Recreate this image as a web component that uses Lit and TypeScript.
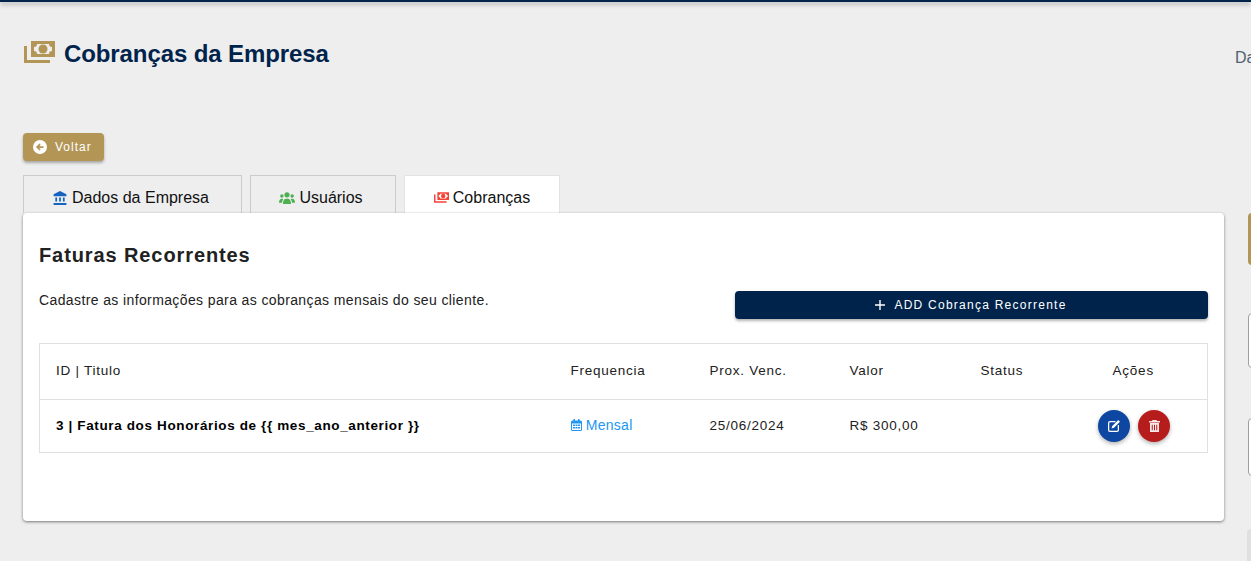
import { LitElement, html, css, svg } from "lit";
import { customElement } from "lit/decorators.js";

const bills = (fg: string) => svg`
  <path fill=${fg} fill-rule="evenodd" d="M7 0h24v16H7zM13 3a3 3 0 0 1-3 3v4a3 3 0 0 1 3 3h12a3 3 0 0 1 3-3V6a3 3 0 0 1-3-3z"/>
  <circle fill=${fg} cx="19" cy="8" r="4.500"/>
  <path fill=${fg} d="M0 5h3v14h23v3H0z"/>`;

@customElement("app-root")
export class AppRoot extends LitElement {
  static styles = css`
    :host { display: block; font-family: "Liberation Sans", Arial, sans-serif; }
    * { box-sizing: border-box; }
    .page { width: 1251px; height: 561px; overflow: hidden; background: #eeeeee; display: flex; flex-direction: column; }
    .topbar { height: 2px; flex: none; background: #00234b; box-shadow: 0 2px 5px rgba(0,0,0,.4); }
    .head { flex: none; height: 131px; display: flex; justify-content: space-between; padding: 37px 0 0 24px; }
    .title { display: flex; gap: 9px; align-items: flex-start; margin: 0; font-size: 24px; font-weight: 700; line-height: 30px; letter-spacing: -.1px; color: #00234b; }
    .title svg { margin-top: 2px; }
    .crumb { width: 16px; overflow: hidden; white-space: nowrap; font-size: 16px; color: #4f6272; margin-top: 10px; line-height: 18px; }
    .main { flex: 1; display: flex; align-items: flex-start; padding-left: 23px; }
    .left { width: 1201px; flex: none; }
    .back { display: flex; align-items: center; gap: 8px; width: 81px; height: 28px; padding: 0 10px; border: 0; border-radius: 4px; background: #b39656; color: #fff; font: 400 12px "Liberation Sans", Arial, sans-serif; letter-spacing: 1px; box-shadow: 0 2px 3px rgba(0,0,0,.3); }
    .tabs { display: flex; gap: 8px; margin-top: 14px; height: 38px; }
    .tab { display: flex; align-items: center; justify-content: center; gap: 5px; height: 38px; border: 1px solid #ccc; border-bottom: 0; font-size: 16px; color: #111; padding: 6px 3px 0 0; }
    .tab.t2 { gap: 4px; padding-right: 4px; }
    .tab.active { background: #fff; border-color: #e3e3e3; gap: 4px; padding-right: 0; }
    .t1 { width: 219px; } .t2 { width: 146px; } .t3 { width: 156px; }
    .card { position: relative; height: 308px; background: #fff; border-radius: 4px; box-shadow: 0 1px 3px rgba(0,0,0,.5); padding: 30px 16px 0; }
    .card h2 { margin: 0; font-size: 20px; line-height: 24px; font-weight: 700; letter-spacing: .9px; color: #212121; }
    .row { display: flex; justify-content: space-between; align-items: flex-start; margin-top: 24px; }
    .row p { margin: 0; font-size: 14px; line-height: 18px; letter-spacing: .385px; color: #212121; }
    .add { display: flex; align-items: center; justify-content: center; gap: 8px; width: 473px; height: 28px; padding-right: 8px; border: 0; border-radius: 4px; background: #00234b; color: #fff; font: 400 12px "Liberation Sans", Arial, sans-serif; letter-spacing: 1.25px; box-shadow: 0 2px 3px rgba(0,0,0,.3); }
    table { width: 1169px; margin-top: 24px; border-collapse: collapse; table-layout: fixed; font-size: 13.500px; letter-spacing: .75px; color: #212121; border: 1px solid #e0e0e0; }
    tr { border-bottom: 1px solid #e0e0e0; }
    th { height: 56px; padding: 0 16px 2px; text-align: left; font-weight: 400; }
    th.c { text-align: center; padding-left: 18px; }
    td { height: 53px; padding: 0 16px 2px; }
    td.act { padding: 0 16px 0 20px; }
    .name { font-weight: 700; color: #000; letter-spacing: .63px; }
    .freq { color: #2196f3; font-size: 14px; letter-spacing: .3px; }
    .freq svg { vertical-align: -1px; }
    .acts { display: flex; justify-content: center; gap: 8px; }
    .fab { width: 32px; height: 32px; border-radius: 50%; border: 0; padding: 0; display: flex; align-items: center; justify-content: center; box-shadow: 0 2px 4px rgba(0,0,0,.3); }
    .fab.e { background: #0d47a1; } .fab.d { background: #b71c1c; }
    .right { flex: none; margin-left: 24px; width: 60px; display: flex; flex-direction: column; padding-top: 80px; }
    .goldbox { height: 52px; background: #b39656; border-radius: 4px; }
    .field { background: #fff; border: 1px solid #9e9e9e; border-radius: 4px; }
    .f1 { height: 55px; margin-top: 48px; } .f2 { height: 58px; margin-top: 50px; }
    .grey { height: 40px; margin-top: 53px; margin-left: -1px; background: #e0e0e0; border-radius: 4px; }
  `;

  render() {
    return html`<div class="page">
      <div class="topbar"></div>
      <header class="head">
        <h1 class="title">
          <svg width="31" height="22" viewBox="0 0 31 22">${bills("#b39656")}</svg>
          Cobranças da Empresa
        </h1>
        <div class="crumb">Dashboard</div>
      </header>
      <div class="main">
        <div class="left">
          <button class="back">
            <svg width="14" height="14" viewBox="0 0 24 24"><path fill="#fff" d="M12 0a12 12 0 1 0 0 24 12 12 0 0 0 0-24zm6 13.500h-7.400l2.600 2.600-2.100 2.100L5 12.100 11.100 6l2.100 2.100-2.600 2.400H18z"/></svg>
            Voltar
          </button>
          <nav class="tabs">
            <div class="tab t1">
              <svg width="14" height="14" viewBox="0 0 24 24"><path fill="#1565c0" d="M12 0 1 5.500V9h22V5.500zM4 11v7h3v-7zm6.500 0v7h3v-7zm6.500 0v7h3v-7zM1 20.500V24h22v-3.500z"/></svg>
              Dados da Empresa
            </div>
            <div class="tab t2">
              <svg width="16" height="12" viewBox="0 0 28 21"><g fill="#4caf50"><circle cx="14" cy="5" r="4.500"/><circle cx="5" cy="7" r="3"/><circle cx="23" cy="7" r="3"/><path d="M7 21c0-7 3-9 7-9s7 2 7 9zM0 19c0-5 2-7 5-7 1 0 2 .3 2.500.7C6 14 5.300 17 5.300 19zM28 19c0-5-2-7-5-7-1 0-2 .3-2.500.7 1.500 1.300 2.200 4.300 2.200 6.300z"/></g></svg>
              Usuários
            </div>
            <div class="tab t3 active">
              <svg width="15" height="11" viewBox="0 0 31 22">${bills("#f44336")}</svg>
              Cobranças
            </div>
          </nav>
          <section class="card">
            <h2>Faturas Recorrentes</h2>
            <div class="row">
              <p>Cadastre as informações para as cobranças mensais do seu cliente.</p>
              <button class="add">
                <svg width="12" height="12" viewBox="0 0 12 12"><path fill="#fff" d="M5.300 1h1.400v4.300H11v1.400H6.700V11H5.300V6.700H1V5.300h4.300z"/></svg>
                ADD Cobrança Recorrente
              </button>
            </div>
            <table>
              <colgroup><col style="width:515px"/><col style="width:139px"/><col style="width:140px"/><col style="width:131px"/><col style="width:93px"/><col/></colgroup>
              <thead><tr><th>ID | Titulo</th><th>Frequencia</th><th>Prox. Venc.</th><th>Valor</th><th>Status</th><th class="c">Ações</th></tr></thead>
              <tbody><tr>
                <td class="name">3 | Fatura dos Honorários de {{ mes_ano_anterior }}</td>
                <td class="freq"><svg width="11" height="12" viewBox="0 0 22 24"><path fill="#2196f3" fill-rule="evenodd" d="M5 0h3v3h6V0h3v3h2a3 3 0 0 1 3 3v15a3 3 0 0 1-3 3H3a3 3 0 0 1-3-3V6a3 3 0 0 1 3-3h2zM2 9v12a1 1 0 0 0 1 1h16a1 1 0 0 0 1-1V9z"/><path fill="#2196f3" d="M4 11h4v3H4zm5 0h4v3H9zm5 0h4v3h-4zM4 16h4v3H4zm5 0h4v3H9zm5 0h4v3h-4z"/></svg> Mensal</td>
                <td>25/06/2024</td>
                <td>R$ 300,00</td>
                <td></td>
                <td class="act"><div class="acts">
                  <button class="fab e"><svg width="12" height="12" viewBox="0 0 24 24"><path fill="#fff" d="M4 2h11v2.500H4a1.500 1.500 0 0 0-1.500 1.500v14A1.500 1.500 0 0 0 4 21.500h14a1.500 1.500 0 0 0 1.500-1.500V10H22v10a4 4 0 0 1-4 4H4a4 4 0 0 1-4-4V6a4 4 0 0 1 4-4zM20.500 0 24 3.500 12 15.500l-5 1.500 1.500-5z"/></svg></button>
                  <button class="fab d"><svg width="11" height="12" viewBox="0 0 22 24"><path fill="#fff" fill-opacity=".9" fill-rule="evenodd" d="M7 0h8l1 2h6v3H0V2h6zM2 6h18v18H2zm3.500 3.500v11h2v-11zm4.500 0v11h2v-11zm4.500 0v11h2v-11z"/></svg></button>
                </div></td>
              </tr></tbody>
            </table>
          </section>
        </div>
        <aside class="right">
          <div class="goldbox"></div>
          <div class="field f1"></div>
          <div class="field f2"></div>
          <div class="grey"></div>
        </aside>
      </div>
    </div>`;
  }
}
